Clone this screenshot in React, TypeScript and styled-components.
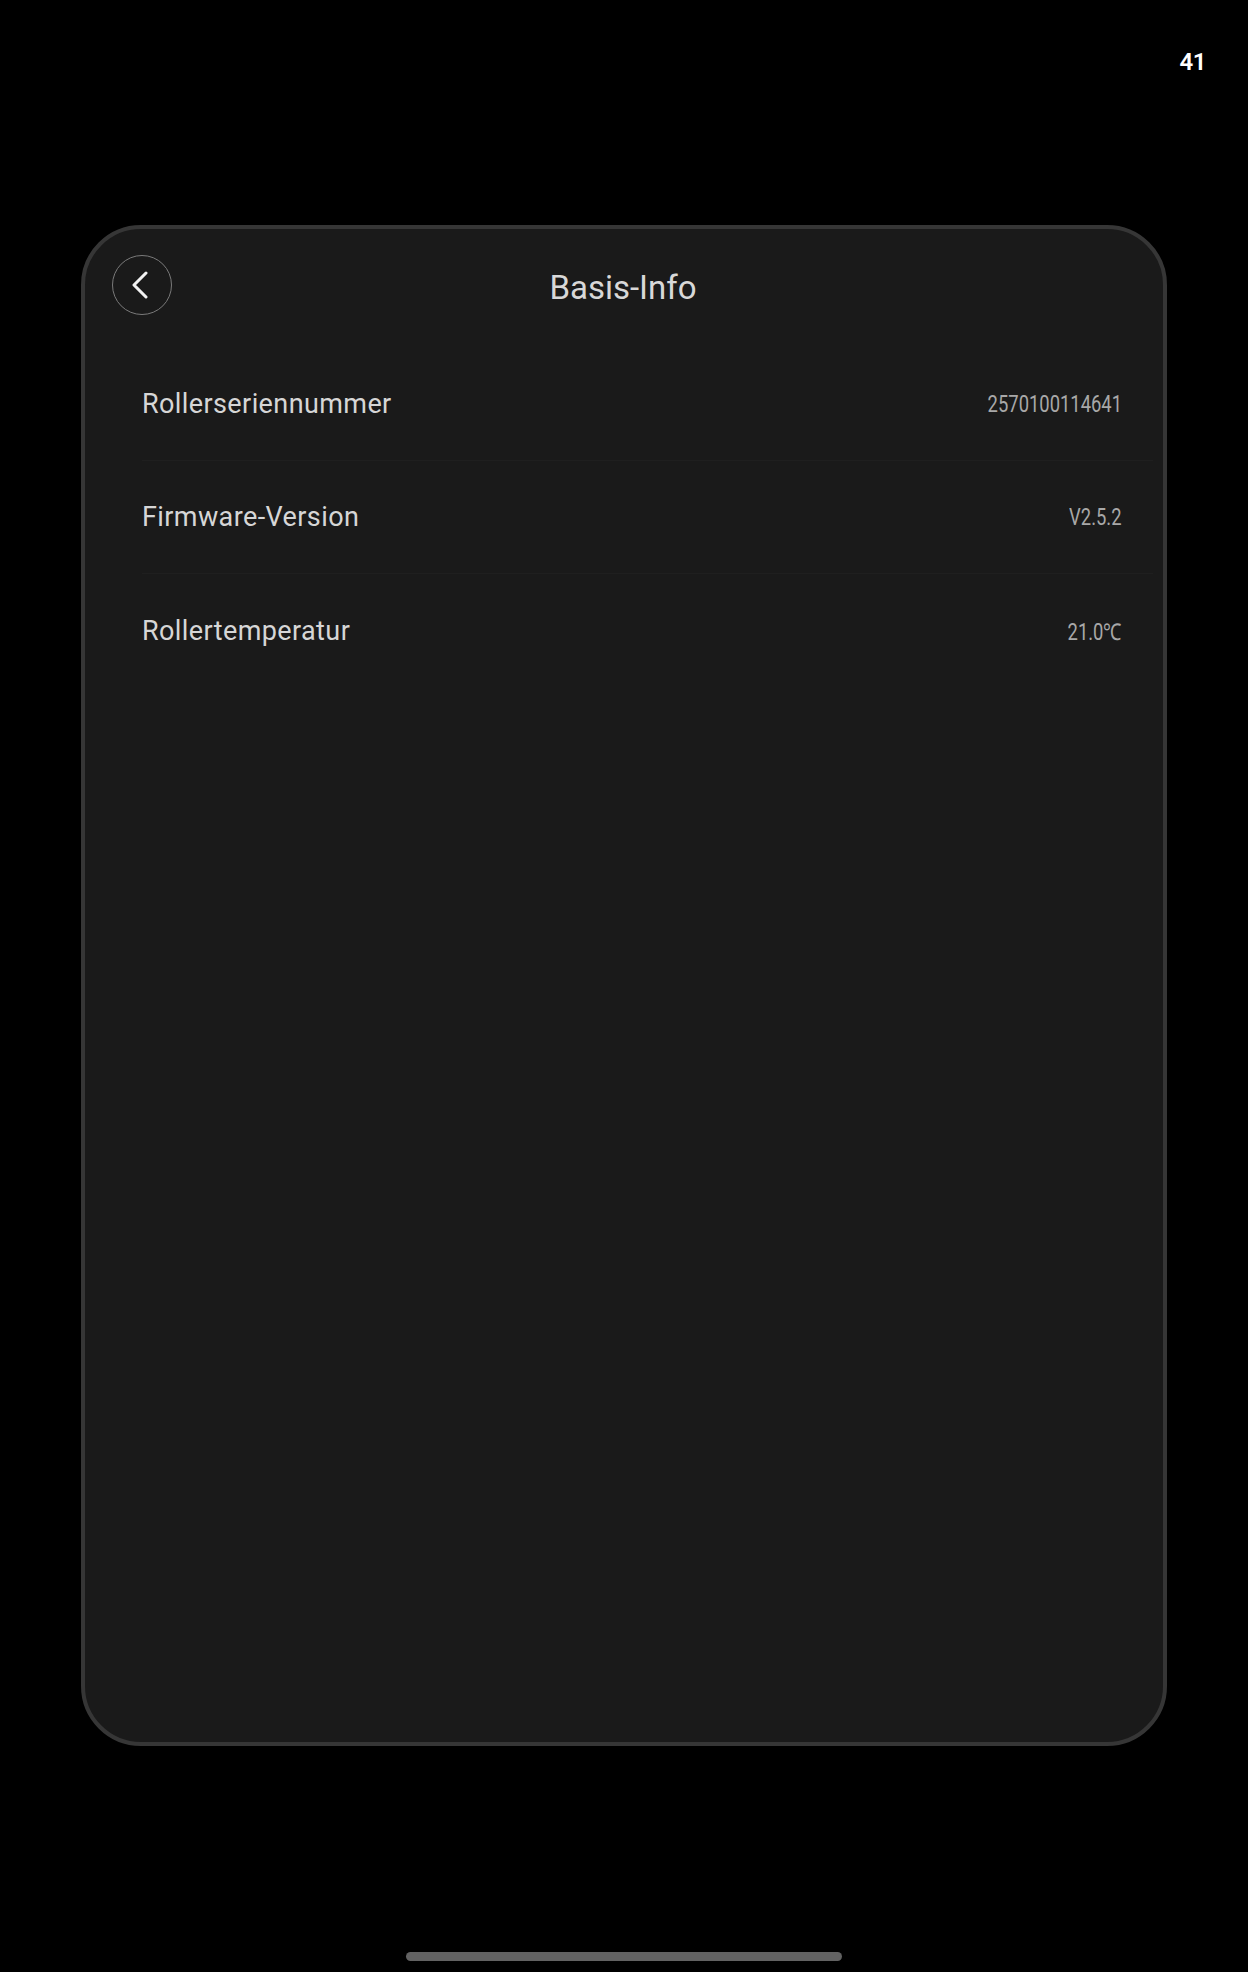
import React from 'react';
import styled, { createGlobalStyle } from 'styled-components';

type InfoItem = {
  label: string;
  value: string;
};

const items: InfoItem[] = [
  { label: 'Rollerseriennummer', value: '2570100114641' },
  { label: 'Firmware-Version', value: 'V2.5.2' },
  { label: 'Rollertemperatur', value: '21.0℃' },
];

const GlobalStyle = createGlobalStyle`
  * {
    box-sizing: border-box;
  }

  html,
  body {
    margin: 0;
    padding: 0;
    background: #000;
  }

  body {
    font-family: Roboto, 'Noto Sans', sans-serif;
    -webkit-font-smoothing: antialiased;
  }
`;

const BackIcon = (): JSX.Element => (
  <svg width="18" height="28" viewBox="0 0 18 28" fill="none">
    <path
      d="M15 2 L3 14 L15 26"
      stroke="#f2f2f2"
      strokeWidth="3"
      strokeLinecap="round"
      strokeLinejoin="round"
    />
  </svg>
);

export default function App(): JSX.Element {
  return (
    <Page>
      <GlobalStyle />

      <StatusBar>
        <Clock>41</Clock>
      </StatusBar>

      <Card>
        <Header>
          <BackButton aria-label="Zurück">
            <BackIcon />
          </BackButton>

          <Title>Basis-Info</Title>
        </Header>

        <List>
          {items.map((item) => (
            <Row key={item.label}>
              <Label>{item.label}</Label>
              <Value>{item.value}</Value>
            </Row>
          ))}
        </List>
      </Card>

      <HomeBar />
    </Page>
  );
}

const Page = styled.div`
  width: 1248px;
  height: 1972px;
  background: #000;
  display: flex;
  flex-direction: column;
  overflow: hidden;
`;

const StatusBar = styled.div`
  height: 225px;
  display: flex;
  justify-content: flex-end;
  align-items: flex-start;
  padding: 48px 42px 0 0;
`;

const Clock = styled.span`
  color: #fff;
  font-size: 24px;
  font-weight: 600;
  letter-spacing: -0.5px;
`;

const Card = styled.div`
  margin: 0 81px;
  height: 1521px;
  background: #1a1a1a;
  border: 4px solid #363636;
  border-radius: 60px;
  padding: 26px 10px 0 27px;
`;

const Header = styled.div`
  display: grid;
  grid-template-columns: 60px 1fr 60px;
  align-items: center;
  height: 60px;
`;

const BackButton = styled.button`
  width: 60px;
  height: 60px;
  border-radius: 50%;
  border: 1.5px solid #7a7a7a;
  background: transparent;
  display: grid;
  place-items: center;
  padding: 0 4px 0 0;
  cursor: pointer;
`;

const Title = styled.h1`
  margin: 0;
  padding: 5px 19px 0 0;
  text-align: center;
  color: #d8d8d8;
  font-size: 33px;
  font-weight: 400;
`;

const List = styled.div`
  margin-top: 33px;
  padding-left: 30px;
`;

const Row = styled.div`
  height: 113px;
  display: flex;
  align-items: center;
  justify-content: space-between;
  padding-right: 31px;
  border-bottom: 1px solid #1f1f1f;

  &:last-child {
    border-bottom: none;
  }
`;

const Label = styled.span`
  color: #d6d6d6;
  font-size: 27px;
  font-weight: 400;
  letter-spacing: 0.4px;
`;

const Value = styled.span`
  display: inline-block;
  color: #a8a8a8;
  font-family: Roboto, sans-serif;
  font-size: 23px;
  transform: scaleX(0.8);
  transform-origin: right center;
`;

const HomeBar = styled.div`
  margin: auto auto 11px;
  width: 436px;
  height: 9px;
  border-radius: 5px;
  background: #626262;
`;
